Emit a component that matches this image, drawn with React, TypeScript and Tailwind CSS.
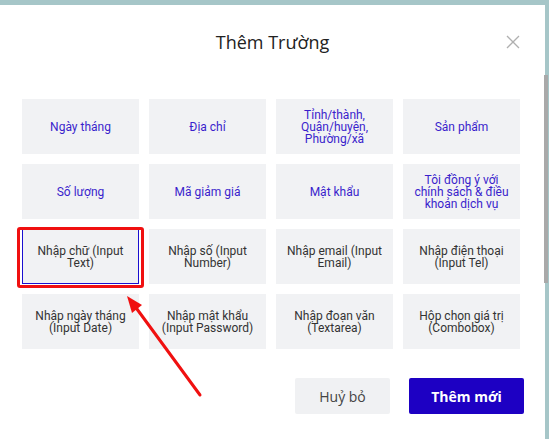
const fields = [
  "Ngày tháng",
  "Địa chỉ",
  "Tỉnh/thành, Quận/huyện, Phường/xã",
  "Sản phẩm",
  "Số lượng",
  "Mã giảm giá",
  "Mật khẩu",
  "Tôi đồng ý với chính sách & điều khoản dịch vụ",
];

const inputs = [
  "Nhập chữ (Input Text)",
  "Nhập số (Input Number)",
  "Nhập email (Input Email)",
  "Nhập điện thoại (Input Tel)",
  "Nhập ngày tháng (Input Date)",
  "Nhập mật khẩu (Input Password)",
  "Nhập đoạn văn (Textarea)",
  "Hộp chọn giá trị (Combobox)",
];

export default function App() {
  return (
    <div className="relative w-[549px] h-[439px] overflow-hidden bg-[#a6c6c8] pt-[5px]">
      <div className="relative w-[545px] h-[434px] bg-white">
        {/* header */}
        <div className="relative flex h-[74px] items-center justify-center pb-[1px]">
          <h2 className="text-[18px] text-[#222] font-['Open_Sans',sans-serif] mt-[1px]">
            Thêm Trường
          </h2>
          <button className="absolute right-[25px] top-[30px] text-[#b0b0b0]">
            <svg width="14" height="14" viewBox="0 0 14 14">
              <path d="M1 1L13 13M13 1L1 13" stroke="currentColor" strokeWidth="1.3" />
            </svg>
          </button>
        </div>

        {/* grid */}
        <div className="pl-[22px] pt-[20px] font-['Roboto',sans-serif] text-[12px] leading-[12px]">
          <div className="grid grid-cols-[repeat(4,117px)] auto-rows-[55px] gap-x-[10px] gap-y-[10px]">
            {fields.map((f) => (
              <div
                key={f}
                className="flex items-center justify-center bg-[#f1f2f4] px-[8px] text-center text-[#3a1fcc]"
              >
                {f}
              </div>
            ))}
            {inputs.map((f, i) => (
              <div
                key={f}
                className={
                  "flex items-center justify-center bg-[#f1f2f4] px-[8px] text-center text-[#333] " +
                  (i === 0 ? "border border-[#1a0fd0]" : "")
                }
              >
                {f}
              </div>
            ))}
          </div>
        </div>

        {/* footer */}
        <div className="flex justify-end gap-[19px] pr-[21px] pt-[29px] font-['Open_Sans',sans-serif] text-[14px]">
          <button className="h-[36px] w-[95px] rounded-[2px] bg-[#f0f1f3] text-[#444]">
            Huỷ bỏ
          </button>
          <button className="h-[36px] w-[115px] rounded-[2px] bg-[#1d00c3] font-bold text-white">
            Thêm mới
          </button>
        </div>
      </div>

      {/* scrollbar thumb */}
      <div className="absolute left-[544px] top-[75px] h-[208px] w-[4px] bg-[#a9a9a9]" />

      {/* red annotation box */}
      <div className="absolute left-[17px] top-[227px] h-[61px] w-[127px] rounded-[3px] border-[3px] border-[#f01010]" />

      {/* red arrow */}
      <svg className="absolute left-0 top-0" width="549" height="439" viewBox="0 0 549 439">
        <line x1="200" y1="395" x2="134" y2="305" stroke="#f01010" strokeWidth="3" strokeLinecap="round" />
        <polygon points="127,296 142,305 132,313" fill="#f01010" />
      </svg>
    </div>
  );
}
